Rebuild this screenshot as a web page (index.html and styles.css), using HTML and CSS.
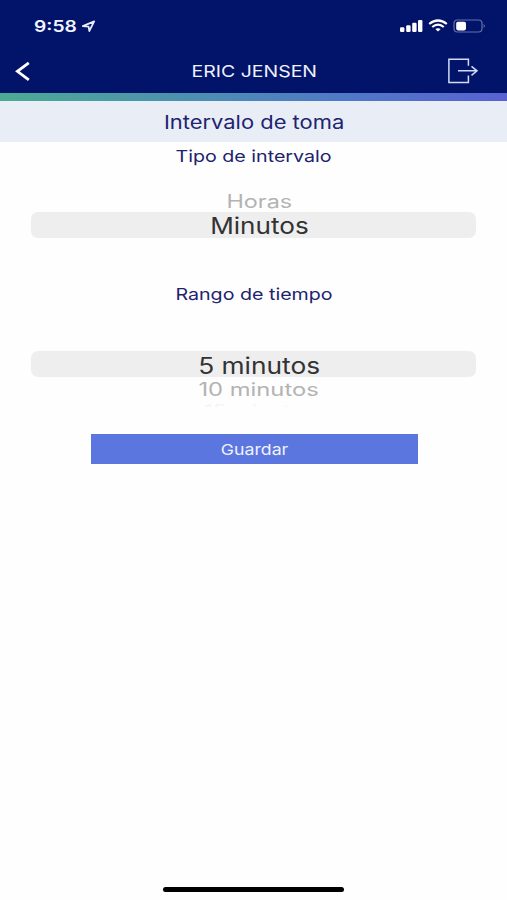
FILE: index.html
```html
<!DOCTYPE html>
<html lang="es">
<head>
<meta charset="utf-8">
<meta name="viewport" content="width=device-width, initial-scale=1">
<title>Intervalo de toma</title>
<link rel="stylesheet" href="styles.css">
</head>
<body>
<div class="screen">
  <header class="top">
    <div class="status">
      <div class="clock">
        <span class="time">9:58</span>
        <svg class="location" width="14" height="13" viewBox="0 0 14 13"><path d="M.8 6.1 12.2 1.4 7.3 11 6.6 6.7Z" fill="none" stroke="#e8ebfa" stroke-width="1.7" stroke-linejoin="round"/></svg>
      </div>
      <svg class="indicators" width="88" height="16" viewBox="0 0 88 16">
        <g fill="#fff">
          <rect x="1" y="9.3" width="4.4" height="4.7" rx="1.2"/>
          <rect x="7.2" y="7.3" width="4.4" height="6.7" rx="1.2"/>
          <rect x="13.2" y="4.7" width="4.4" height="9.3" rx="1.2"/>
          <rect x="19" y="2" width="4.4" height="12" rx="1.2"/>
          <path d="M36.3 11.1Q39 9.2 41.7 11.1L39 13.6Z"/>
          <rect x="57.2" y="3.8" width="9.8" height="8.6" rx="1.8"/>
        </g>
        <g fill="none" stroke="#fff" stroke-width="2.2">
          <path d="M30.2 6Q39 -1 47.8 6"/>
          <path d="M33.2 9Q39 4.2 44.8 9"/>
        </g>
        <rect x="55" y="2" width="28" height="12" rx="3.5" fill="none" stroke="#6470ae" stroke-width="1.2"/>
        <path d="M84.6 6Q87.2 8 84.6 10Z" fill="#6470ae"/>
      </svg>
    </div>
    <nav class="nav">
      <svg class="back" width="18" height="22" viewBox="0 0 18 22"><path d="M14.8 1.8 3.4 10.3 14.8 18.8" fill="none" stroke="#fff" stroke-width="2.8"/></svg>
      <span class="name">ERIC JENSEN</span>
      <svg class="exit" width="32" height="28" viewBox="0 0 32 28"><path d="M21.4 7.8V1.3H1.9V24.5H21.4V17.6M11 12.8H30M24.5 8.3 30 12.8 24.5 17.3" fill="none" stroke="#d4daf4" stroke-width="1.5"/></svg>
    </nav>
  </header>
  <div class="stripe"></div>
  <h1 class="title"><span>Intervalo de toma</span></h1>
  <main>
    <h2 class="label type-label"><span>Tipo de intervalo</span></h2>
    <div class="picker type-picker">
      <div class="option"><span class="w-horas">Horas</span></div>
      <div class="selected"><span class="w-minutos">Minutos</span></div>
    </div>
    <h2 class="label range-label"><span>Rango de tiempo</span></h2>
    <div class="picker range-picker">
      <div class="selected"><span class="w-five">5 minutos</span></div>
      <div class="option"><span class="w-ten">10 minutos</span></div>
      <div class="option next"><span>15 minutos</span></div>
    </div>
    <button class="save"><span>Guardar</span></button>
  </main>
  <div class="home"></div>
</div>
</body>
</html>
```
FILE: styles.css
```css
* { box-sizing: border-box; }
body {
  margin: 0;
  background: #fefefe;
  font-family: Inter, "Liberation Sans", sans-serif;
}
span { display: inline-block; white-space: nowrap; }
svg { display: block; }
h1, h2 { margin: 0; font-weight: 400; }
.screen {
  display: flex;
  flex-direction: column;
  width: 507px;
  height: 900px;
  overflow: hidden;
}
.top { height: 93px; background: #02146a; }
.status {
  display: flex;
  justify-content: space-between;
  align-items: center;
  height: 52px;
  padding: 0 20px 0 34px;
}
.clock { display: flex; align-items: center; }
.time {
  width: 48px;
  color: #f3f5ff;
  font-size: 15.5px;
  font-weight: 600;
  transform: scaleX(1.24);
  transform-origin: left;
}
.nav {
  display: grid;
  grid-template-columns: 60px 1fr 60px;
  align-items: center;
  height: 39px;
}
.back { margin-left: 14px; }
.name {
  justify-self: center;
  padding: 0 0 1px 1px;
  color: #eef0fb;
  font-size: 16.5px;
  transform: scaleX(1.18);
}
.stripe {
  height: 8px;
  background: linear-gradient(90deg, #4bab93, #4c8eb2 40%, #4f7bc5 65%, #5961d2);
}
.title {
  height: 41px;
  padding-left: 1px;
  background: #e9edf5;
  color: #20236f;
  font-size: 18.5px;
  line-height: 43px;
  text-align: center;
}
.title span { transform: scaleX(1.185); }
main { display: flex; flex-direction: column; text-align: center; }
.label { height: 28px; padding-left: 1px; color: #20236f; font-size: 16.5px; line-height: 28px; }
.label span { transform: scaleX(1.19); }
.picker { padding: 0 31px; }
.type-picker { height: 110px; padding-top: 22px; }
.range-picker { height: 126px; padding-top: 43px; }
.selected {
  height: 26px;
  padding-left: 11px;
  border-radius: 7px;
  background: #eee;
  color: #333;
  font-size: 22.5px;
  line-height: 27px;
}
.range-picker .selected { line-height: 29px; }
.option {
  height: 20px;
  padding-left: 11px;
  color: #b3b3b3;
  font-size: 18px;
  line-height: 20px;
}
.range-picker .option { height: 25px; line-height: 25px; }
.range-picker .next { height: 5px; overflow: hidden; line-height: 19px; color: #f5f5f5; }
.w-horas { transform: scaleX(1.3); }
.w-minutos { transform: scaleX(1.16); }
.w-five { transform: scaleX(1.17); }
.w-ten { transform: scaleX(1.32); }
.next span { transform: scaleX(1.22); }
.save {
  align-self: center;
  width: 327px;
  height: 30px;
  margin-left: 2px;
  padding: 0;
  border: 0;
  background: #5b76df;
  color: #f0f3ff;
  font: 15px/32px Inter, "Liberation Sans", sans-serif;
}
.save span { transform: scaleX(1.18); }
.home {
  align-self: center;
  width: 181px;
  height: 5px;
  margin: auto 0 8px;
  border-radius: 3px;
  background: #000;
}
```
